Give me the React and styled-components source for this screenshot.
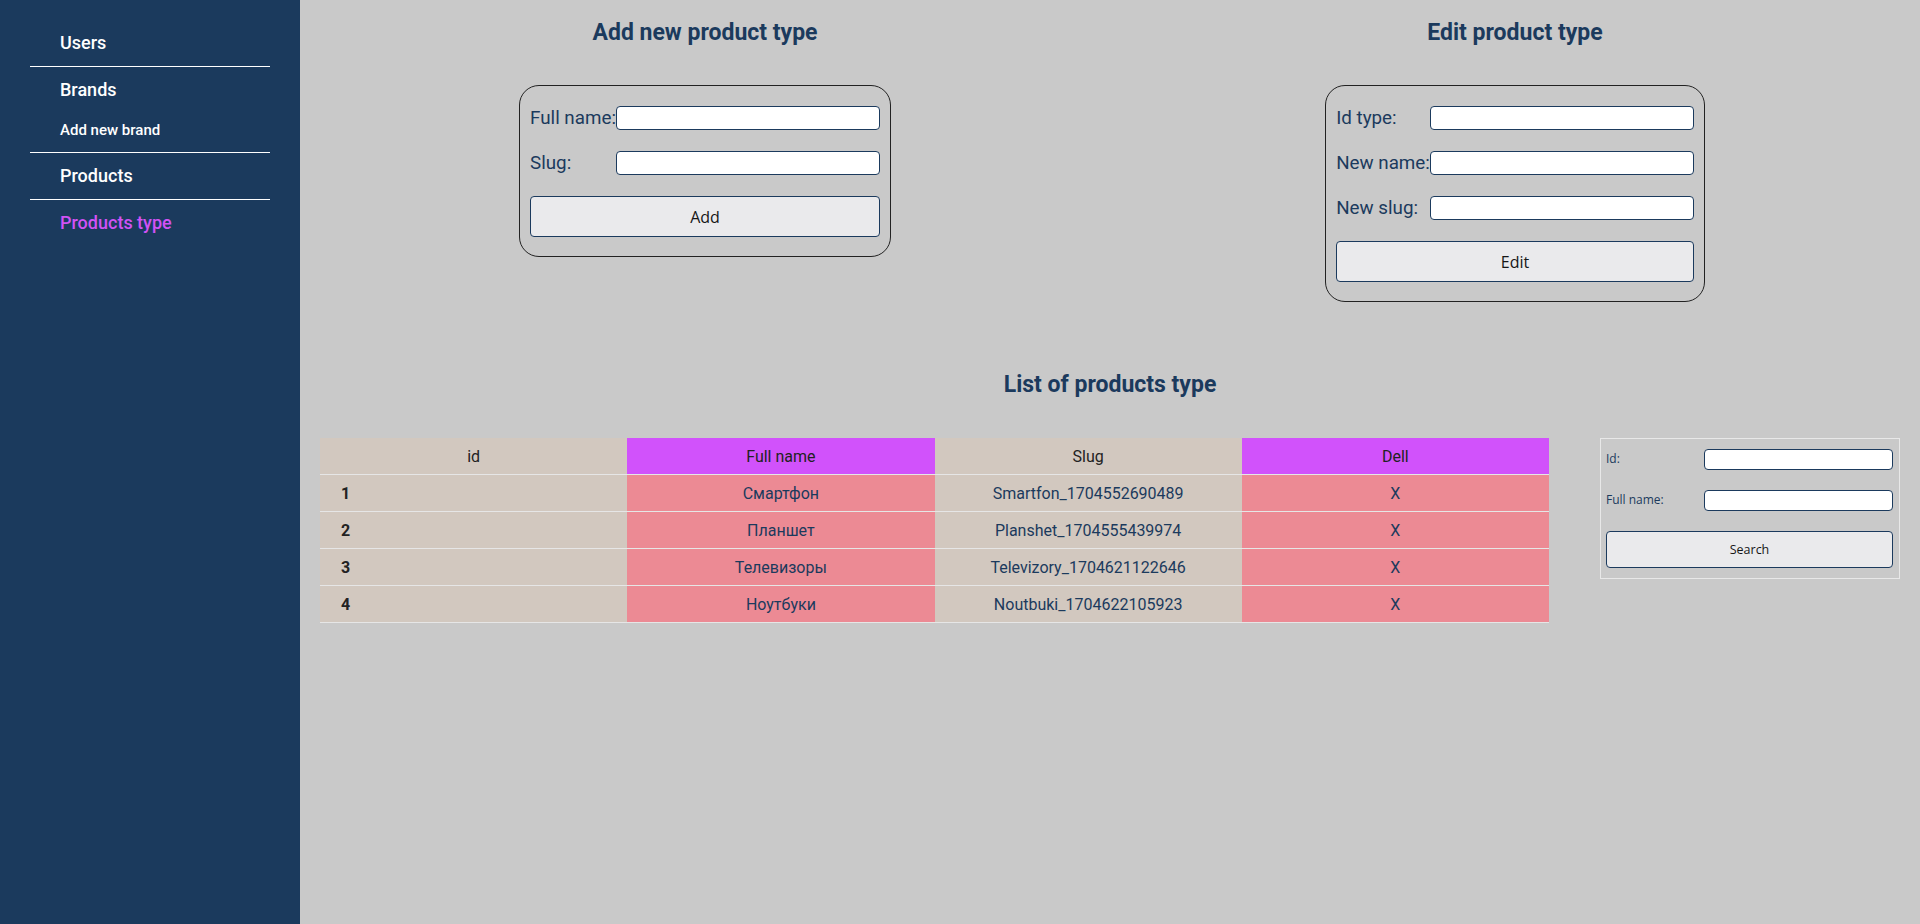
import { createGlobalStyle } from "styled-components";
import styled from "styled-components";

const navy = "#1b3a5d";

const GlobalStyle = createGlobalStyle`
  html, body {
    margin: 0;
    padding: 0;
    height: 100%;
  }
  body {
    font-family: Roboto, "Liberation Sans", sans-serif;
    background: #c9c9c9;
  }
  #root {
    height: 100%;
  }
`;

const Layout = styled.div`
  display: flex;
  min-height: 924px;
`;

// sidebar
const Sidebar = styled.nav`
  width: 300px;
  flex-shrink: 0;
  background: ${navy};
  padding: 20px 30px;
  box-sizing: border-box;
`;

const NavGroup = styled.div`
  display: flex;
  flex-direction: column;
  gap: 21px;
  padding: 12px 0 13px 30px;
  border-bottom: ${(p) => (p.$last ? "none" : "1px solid #ffffff")};
`;

const NavLink = styled.a`
  color: ${(p) => (p.$active ? "#d152f5" : "#ffffff")};
  font-size: ${(p) => (p.$small ? "15px" : "18px")};
  font-weight: 500;
  text-decoration: none;
  cursor: pointer;
  line-height: normal;
`;

// main
const Main = styled.main`
  flex: 1;
  display: flex;
  flex-direction: column;
  padding-top: 19px;
`;

const FormsRow = styled.div`
  display: grid;
  grid-template-columns: 1fr 1fr;
`;

const FormColumn = styled.section`
  display: flex;
  flex-direction: column;
  align-items: center;
`;

const Title = styled.h2`
  margin: 0;
  font-size: 23px;
  font-weight: 700;
  color: ${navy};
  line-height: 27px;
  text-align: center;
`;

const FormCard = styled.form`
  margin-top: 39px;
  border: 1px solid #222;
  border-radius: 20px;
  padding: 20px 10px 19px 10px;
  display: grid;
  grid-template-columns: auto 264px;
  row-gap: 21px;
  align-items: center;
`;

const Label = styled.label`
  font-size: 18.8px;
  color: ${navy};
`;

const TextInput = styled.input`
  box-sizing: border-box;
  width: 100%;
  height: ${(p) => (p.$small ? "21px" : "24px")};
  border: 1px solid ${navy};
  border-radius: 4px;
  background: #fff;
  outline: none;
`;

const Button = styled.button`
  grid-column: 1 / -1;
  height: ${(p) => (p.$small ? "37px" : "41px")};
  box-sizing: border-box;
  border: 1px solid ${navy};
  border-radius: 4px;
  background: #eaeaec;
  color: #161616;
  font-family: "Open Sans", "DejaVu Sans", sans-serif;
  font-size: ${(p) => (p.$small ? "12.5px" : "16px")};
  cursor: pointer;
`;

const ListTitle = styled(Title)`
  margin-top: 69px;
`;

const ListRow = styled.div`
  display: flex;
  align-items: flex-start;
  gap: 51px;
  padding: 40px 20px 0 20px;
`;

const Table = styled.table`
  flex: 1;
  min-width: 0;
  border-collapse: collapse;
  table-layout: fixed;
  font-size: 16px;
`;

const HeadCell = styled.th`
  width: 25%;
  height: 36px;
  padding: 0;
  font-weight: 400;
  color: #222;
  background: ${(p) => (p.$accent ? "#d152fb" : "#d2c8bf")};
  border-bottom: 1px solid #e6e6e6;
`;

const Cell = styled.td`
  height: 36px;
  padding: 0 ${(p) => (p.$id ? "21px" : "0")};
  text-align: ${(p) => (p.$id ? "left" : "center")};
  font-weight: ${(p) => (p.$id ? 700 : 400)};
  color: ${(p) => (p.$id ? "#222" : navy)};
  background: ${(p) => (p.$accent ? "#ec8a94" : "#d2c8bf")};
  border-bottom: 1px solid #e6e6e6;
`;

const SearchCard = styled.form`
  width: 300px;
  flex-shrink: 0;
  box-sizing: border-box;
  border: 1px solid #e8e8e8;
  padding: 10px 6px 10px 5px;
  display: grid;
  grid-template-columns: 98px 1fr;
  row-gap: 20px;
`;

const SearchLabel = styled.label`
  font-family: "Open Sans", "DejaVu Sans", sans-serif;
  font-size: 12px;
  color: ${navy};
  padding-top: 1px;
`;

const types = [
  { id: 1, name: "Смартфон", slug: "Smartfon_1704552690489" },
  { id: 2, name: "Планшет", slug: "Planshet_1704555439974" },
  { id: 3, name: "Телевизоры", slug: "Televizory_1704621122646" },
  { id: 4, name: "Ноутбуки", slug: "Noutbuki_1704622105923" },
];

export default function App() {
  return (
    <>
      <GlobalStyle />
      <Layout>
        <Sidebar>
          <NavGroup>
            <NavLink>Users</NavLink>
          </NavGroup>
          <NavGroup>
            <NavLink>Brands</NavLink>
            <NavLink $small>Add new brand</NavLink>
          </NavGroup>
          <NavGroup>
            <NavLink>Products</NavLink>
          </NavGroup>
          <NavGroup $last>
            <NavLink $active>Products type</NavLink>
          </NavGroup>
        </Sidebar>
        <Main>
          <FormsRow>
            <FormColumn>
              <Title>Add new product type</Title>
              <FormCard onSubmit={(e) => e.preventDefault()}>
                <Label>Full name:</Label>
                <TextInput />
                <Label>Slug:</Label>
                <TextInput />
                <Button>Add</Button>
              </FormCard>
            </FormColumn>
            <FormColumn>
              <Title>Edit product type</Title>
              <FormCard onSubmit={(e) => e.preventDefault()}>
                <Label>Id type:</Label>
                <TextInput />
                <Label>New name:</Label>
                <TextInput />
                <Label>New slug:</Label>
                <TextInput />
                <Button>Edit</Button>
              </FormCard>
            </FormColumn>
          </FormsRow>
          <ListTitle>List of products type</ListTitle>
          <ListRow>
            <Table>
              <thead>
                <tr>
                  <HeadCell>id</HeadCell>
                  <HeadCell $accent>Full name</HeadCell>
                  <HeadCell>Slug</HeadCell>
                  <HeadCell $accent>Dell</HeadCell>
                </tr>
              </thead>
              <tbody>
                {types.map((t) => (
                  <tr key={t.id}>
                    <Cell $id>{t.id}</Cell>
                    <Cell $accent>{t.name}</Cell>
                    <Cell>{t.slug}</Cell>
                    <Cell $accent>X</Cell>
                  </tr>
                ))}
              </tbody>
            </Table>
            <SearchCard onSubmit={(e) => e.preventDefault()}>
              <SearchLabel>Id:</SearchLabel>
              <TextInput $small />
              <SearchLabel>Full name:</SearchLabel>
              <TextInput $small />
              <Button $small>Search</Button>
            </SearchCard>
          </ListRow>
        </Main>
      </Layout>
    </>
  );
}
